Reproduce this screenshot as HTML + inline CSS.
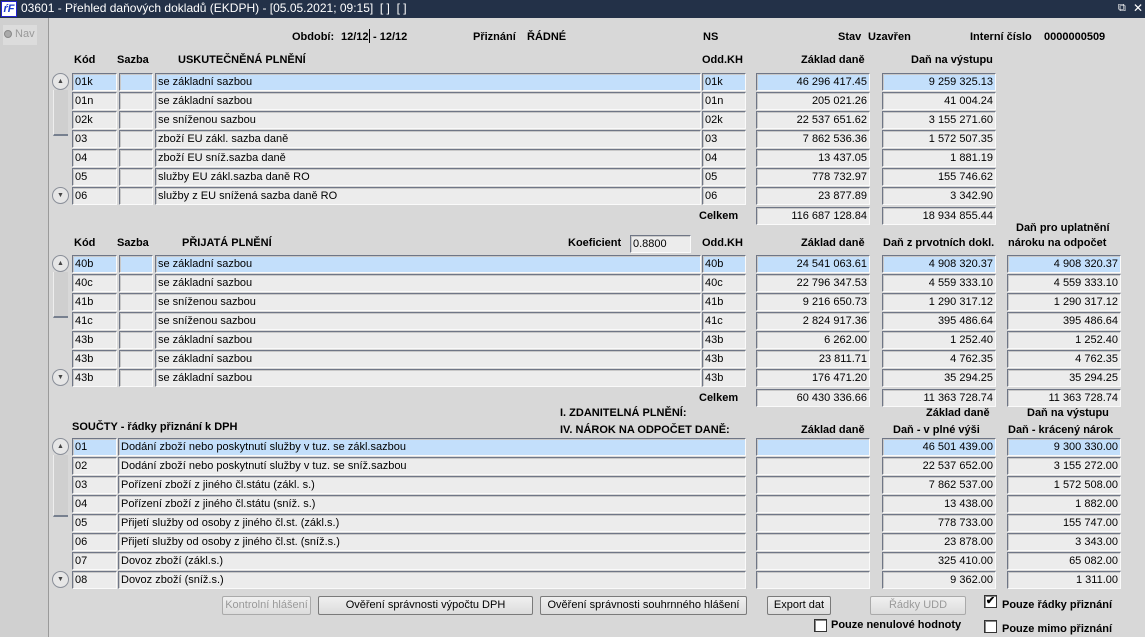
<!DOCTYPE html>
<html><head><meta charset="utf-8"><style>
*{box-sizing:border-box}
body{margin:0;width:1145px;height:637px;overflow:hidden;background:#d8d8d8;font-family:"Liberation Sans",Tahoma,sans-serif;font-size:11px;color:#000;position:relative}
.a{position:absolute;white-space:nowrap}
.b{font-weight:bold}
.r{text-align:right}
.f{position:absolute;height:18px;background:#ececec;border:1px solid;border-color:#6f7686 #fafafa #fafafa #6f7686;box-shadow:inset 1px 1px 0 #c8c8c8;line-height:17px;padding:0 2px;white-space:nowrap;overflow:hidden}
.s{background:#c3dffb}
.n{text-align:right}
.btn{position:absolute;height:19px;border:1px solid #7a7a7a;border-radius:2px;background:linear-gradient(#f0f0f0,#dcdcdc);text-align:center;line-height:16px;font-size:11px}
.dis{color:#9a9a9a;border-color:#aaa}
.cb{position:absolute;width:13px;height:13px;border:1px solid #333;background:#fff;box-shadow:inset 1px 1px 0 #888}
.sc{position:absolute;left:52px;width:17px}
.up,.dn{position:absolute;left:0;width:17px;height:17px;border:1px solid #8a8f99;border-radius:9px;background:#e6e6e6;font-size:7px;text-align:center;line-height:15px;color:#444}
.tr{position:absolute;left:1px;width:15px;background:#cfcfcf;border-left:1px solid #eee;border-bottom:2px solid #77808f}
</style></head><body>
<div class="a" style="left:0;top:0;width:1145px;height:18px;background:#233148"></div>
<div class="a" style="left:1px;top:1px;width:16px;height:16px;background:#fff;border:1px solid #22c;color:#1a3ad0;font-weight:bold;font-style:italic;font-size:11px;line-height:14px;text-align:center">ŕF</div>
<div class="a" style="left:21px;top:1px;color:#fff;font-size:12px">03601 - Přehled daňových dokladů (EKDPH) - [05.05.2021; 09:15]&nbsp; [ ]&nbsp; [ ]</div>
<div class="a" style="left:1118px;top:2px;color:#fff;font-size:11px">⧉</div>
<div class="a" style="left:1133px;top:1px;color:#fff;font-size:12px">✕</div>
<div class="a" style="left:0;top:18px;width:49px;height:619px;background:#d0d0d0;border-right:1px solid #9a9a9a"></div>
<div class="a" style="left:3px;top:25px;width:34px;height:20px;background:#dcdcdc;color:#999;line-height:18px;padding-left:1px"><span style="display:inline-block;width:8px;height:8px;border-radius:5px;background:#aaa;border:1px solid #888;vertical-align:-1px"></span> Nav</div>

<div class="a b" style="left:292px;top:31px">Období:</div>
<div class="a b" style="left:341px;top:31px">12/12</div>
<div class="a" style="left:369px;top:29px;width:1px;height:14px;background:#000"></div>
<div class="a b" style="left:373px;top:31px">- 12/12</div>
<div class="a b" style="left:473px;top:31px">Přiznání</div>
<div class="a b" style="left:527px;top:31px">ŘÁDNÉ</div>
<div class="a b" style="left:703px;top:31px">NS</div>
<div class="a b" style="left:838px;top:31px">Stav</div>
<div class="a b" style="left:868px;top:31px">Uzavřen</div>
<div class="a b" style="left:970px;top:31px">Interní číslo</div>
<div class="a b" style="left:1044px;top:31px">0000000509</div>

<div class="a b" style="left:74px;top:54px">Kód</div>
<div class="a b" style="left:117px;top:54px">Sazba</div>
<div class="a b" style="left:178px;top:54px">USKUTEČNĚNÁ PLNĚNÍ</div>
<div class="a b" style="left:702px;top:54px">Odd.KH</div>
<div class="a b" style="left:801px;top:54px">Základ daně</div>
<div class="a b" style="left:911px;top:54px">Daň na výstupu</div>

<div class="sc" style="top:73px;height:132px"><div class="up" style="top:0">▲</div><div class="tr" style="top:17px;height:46px"></div><div class="dn" style="top:114px">▼</div></div>

<div class="f s" style="left:72px;top:73px;width:45px">01k</div><div class="f s" style="left:119px;top:73px;width:34px"></div><div class="f s" style="left:155px;top:73px;width:546px">se základní sazbou</div><div class="f s" style="left:702px;top:73px;width:44px">01k</div><div class="f s n" style="left:756px;top:73px;width:114px">46 296 417.45</div><div class="f s n" style="left:882px;top:73px;width:114px">9 259 325.13</div>
<div class="f" style="left:72px;top:92px;width:45px">01n</div><div class="f" style="left:119px;top:92px;width:34px"></div><div class="f" style="left:155px;top:92px;width:546px">se základní sazbou</div><div class="f" style="left:702px;top:92px;width:44px">01n</div><div class="f n" style="left:756px;top:92px;width:114px">205 021.26</div><div class="f n" style="left:882px;top:92px;width:114px">41 004.24</div>
<div class="f" style="left:72px;top:111px;width:45px">02k</div><div class="f" style="left:119px;top:111px;width:34px"></div><div class="f" style="left:155px;top:111px;width:546px">se sníženou sazbou</div><div class="f" style="left:702px;top:111px;width:44px">02k</div><div class="f n" style="left:756px;top:111px;width:114px">22 537 651.62</div><div class="f n" style="left:882px;top:111px;width:114px">3 155 271.60</div>
<div class="f" style="left:72px;top:130px;width:45px">03</div><div class="f" style="left:119px;top:130px;width:34px"></div><div class="f" style="left:155px;top:130px;width:546px">zboží EU zákl. sazba daně</div><div class="f" style="left:702px;top:130px;width:44px">03</div><div class="f n" style="left:756px;top:130px;width:114px">7 862 536.36</div><div class="f n" style="left:882px;top:130px;width:114px">1 572 507.35</div>
<div class="f" style="left:72px;top:149px;width:45px">04</div><div class="f" style="left:119px;top:149px;width:34px"></div><div class="f" style="left:155px;top:149px;width:546px">zboží EU sníž.sazba daně</div><div class="f" style="left:702px;top:149px;width:44px">04</div><div class="f n" style="left:756px;top:149px;width:114px">13 437.05</div><div class="f n" style="left:882px;top:149px;width:114px">1 881.19</div>
<div class="f" style="left:72px;top:168px;width:45px">05</div><div class="f" style="left:119px;top:168px;width:34px"></div><div class="f" style="left:155px;top:168px;width:546px">služby EU zákl.sazba daně RO</div><div class="f" style="left:702px;top:168px;width:44px">05</div><div class="f n" style="left:756px;top:168px;width:114px">778 732.97</div><div class="f n" style="left:882px;top:168px;width:114px">155 746.62</div>
<div class="f" style="left:72px;top:187px;width:45px">06</div><div class="f" style="left:119px;top:187px;width:34px"></div><div class="f" style="left:155px;top:187px;width:546px">služby z EU snížená sazba daně RO</div><div class="f" style="left:702px;top:187px;width:44px">06</div><div class="f n" style="left:756px;top:187px;width:114px">23 877.89</div><div class="f n" style="left:882px;top:187px;width:114px">3 342.90</div>
<div class="a b" style="left:699px;top:210px">Celkem</div>
<div class="f n" style="left:756px;top:207px;width:114px">116 687 128.84</div><div class="f n" style="left:882px;top:207px;width:114px">18 934 855.44</div>

<div class="a b" style="left:74px;top:237px">Kód</div>
<div class="a b" style="left:117px;top:237px">Sazba</div>
<div class="a b" style="left:182px;top:237px">PŘIJATÁ PLNĚNÍ</div>
<div class="a b" style="left:568px;top:237px">Koeficient</div>
<div class="f" style="left:630px;top:235px;width:61px">0.8800</div>
<div class="a b" style="left:702px;top:237px">Odd.KH</div>
<div class="a b" style="left:801px;top:237px">Základ daně</div>
<div class="a b" style="left:883px;top:237px">Daň z prvotních dokl.</div>
<div class="a b" style="left:1016px;top:222px">Daň pro uplatnění</div>
<div class="a b" style="left:1008px;top:237px">nároku na odpočet</div>

<div class="sc" style="top:255px;height:132px"><div class="up" style="top:0">▲</div><div class="tr" style="top:17px;height:46px"></div><div class="dn" style="top:114px">▼</div></div>

<div class="f s" style="left:72px;top:255px;width:45px">40b</div><div class="f s" style="left:119px;top:255px;width:34px"></div><div class="f s" style="left:155px;top:255px;width:546px">se základní sazbou</div><div class="f s" style="left:702px;top:255px;width:44px">40b</div><div class="f s n" style="left:756px;top:255px;width:114px">24 541 063.61</div><div class="f s n" style="left:882px;top:255px;width:114px">4 908 320.37</div><div class="f s n" style="left:1007px;top:255px;width:114px">4 908 320.37</div>
<div class="f" style="left:72px;top:274px;width:45px">40c</div><div class="f" style="left:119px;top:274px;width:34px"></div><div class="f" style="left:155px;top:274px;width:546px">se základní sazbou</div><div class="f" style="left:702px;top:274px;width:44px">40c</div><div class="f n" style="left:756px;top:274px;width:114px">22 796 347.53</div><div class="f n" style="left:882px;top:274px;width:114px">4 559 333.10</div><div class="f n" style="left:1007px;top:274px;width:114px">4 559 333.10</div>
<div class="f" style="left:72px;top:293px;width:45px">41b</div><div class="f" style="left:119px;top:293px;width:34px"></div><div class="f" style="left:155px;top:293px;width:546px">se sníženou sazbou</div><div class="f" style="left:702px;top:293px;width:44px">41b</div><div class="f n" style="left:756px;top:293px;width:114px">9 216 650.73</div><div class="f n" style="left:882px;top:293px;width:114px">1 290 317.12</div><div class="f n" style="left:1007px;top:293px;width:114px">1 290 317.12</div>
<div class="f" style="left:72px;top:312px;width:45px">41c</div><div class="f" style="left:119px;top:312px;width:34px"></div><div class="f" style="left:155px;top:312px;width:546px">se sníženou sazbou</div><div class="f" style="left:702px;top:312px;width:44px">41c</div><div class="f n" style="left:756px;top:312px;width:114px">2 824 917.36</div><div class="f n" style="left:882px;top:312px;width:114px">395 486.64</div><div class="f n" style="left:1007px;top:312px;width:114px">395 486.64</div>
<div class="f" style="left:72px;top:331px;width:45px">43b</div><div class="f" style="left:119px;top:331px;width:34px"></div><div class="f" style="left:155px;top:331px;width:546px">se základní sazbou</div><div class="f" style="left:702px;top:331px;width:44px">43b</div><div class="f n" style="left:756px;top:331px;width:114px">6 262.00</div><div class="f n" style="left:882px;top:331px;width:114px">1 252.40</div><div class="f n" style="left:1007px;top:331px;width:114px">1 252.40</div>
<div class="f" style="left:72px;top:350px;width:45px">43b</div><div class="f" style="left:119px;top:350px;width:34px"></div><div class="f" style="left:155px;top:350px;width:546px">se základní sazbou</div><div class="f" style="left:702px;top:350px;width:44px">43b</div><div class="f n" style="left:756px;top:350px;width:114px">23 811.71</div><div class="f n" style="left:882px;top:350px;width:114px">4 762.35</div><div class="f n" style="left:1007px;top:350px;width:114px">4 762.35</div>
<div class="f" style="left:72px;top:369px;width:45px">43b</div><div class="f" style="left:119px;top:369px;width:34px"></div><div class="f" style="left:155px;top:369px;width:546px">se základní sazbou</div><div class="f" style="left:702px;top:369px;width:44px">43b</div><div class="f n" style="left:756px;top:369px;width:114px">176 471.20</div><div class="f n" style="left:882px;top:369px;width:114px">35 294.25</div><div class="f n" style="left:1007px;top:369px;width:114px">35 294.25</div>
<div class="a b" style="left:699px;top:392px">Celkem</div>
<div class="f n" style="left:756px;top:389px;width:114px">60 430 336.66</div><div class="f n" style="left:882px;top:389px;width:114px">11 363 728.74</div><div class="f n" style="left:1007px;top:389px;width:114px">11 363 728.74</div>

<div class="a b" style="left:560px;top:407px">I. ZDANITELNÁ PLNĚNÍ:</div>
<div class="a b" style="left:560px;top:424px">IV. NÁROK NA ODPOČET DANĚ:</div>
<div class="a b" style="left:72px;top:421px">SOUČTY - řádky přiznání k DPH</div>
<div class="a b" style="left:801px;top:424px">Základ daně</div>
<div class="a b" style="left:926px;top:407px">Základ daně</div>
<div class="a b" style="left:893px;top:424px">Daň - v plné výši</div>
<div class="a b" style="left:1027px;top:407px">Daň na výstupu</div>
<div class="a b" style="left:1008px;top:424px">Daň - krácený nárok</div>

<div class="sc" style="top:438px;height:151px"><div class="up" style="top:0">▲</div><div class="tr" style="top:17px;height:62px"></div><div class="dn" style="top:133px">▼</div></div>

<div class="f s" style="left:72px;top:438px;width:45px">01</div><div class="f s" style="left:118px;top:438px;width:628px">Dodání zboží nebo poskytnutí služby v tuz. se zákl.sazbou</div><div class="f s" style="left:756px;top:438px;width:114px"></div><div class="f s n" style="left:882px;top:438px;width:114px">46 501 439.00</div><div class="f s n" style="left:1007px;top:438px;width:114px">9 300 330.00</div>
<div class="f" style="left:72px;top:457px;width:45px">02</div><div class="f" style="left:118px;top:457px;width:628px">Dodání zboží nebo poskytnutí služby v tuz. se sníž.sazbou</div><div class="f" style="left:756px;top:457px;width:114px"></div><div class="f n" style="left:882px;top:457px;width:114px">22 537 652.00</div><div class="f n" style="left:1007px;top:457px;width:114px">3 155 272.00</div>
<div class="f" style="left:72px;top:476px;width:45px">03</div><div class="f" style="left:118px;top:476px;width:628px">Pořízení zboží z jiného čl.státu (zákl. s.)</div><div class="f" style="left:756px;top:476px;width:114px"></div><div class="f n" style="left:882px;top:476px;width:114px">7 862 537.00</div><div class="f n" style="left:1007px;top:476px;width:114px">1 572 508.00</div>
<div class="f" style="left:72px;top:495px;width:45px">04</div><div class="f" style="left:118px;top:495px;width:628px">Pořízení zboží z jiného čl.státu (sníž. s.)</div><div class="f" style="left:756px;top:495px;width:114px"></div><div class="f n" style="left:882px;top:495px;width:114px">13 438.00</div><div class="f n" style="left:1007px;top:495px;width:114px">1 882.00</div>
<div class="f" style="left:72px;top:514px;width:45px">05</div><div class="f" style="left:118px;top:514px;width:628px">Přijetí služby od osoby z jiného čl.st. (zákl.s.)</div><div class="f" style="left:756px;top:514px;width:114px"></div><div class="f n" style="left:882px;top:514px;width:114px">778 733.00</div><div class="f n" style="left:1007px;top:514px;width:114px">155 747.00</div>
<div class="f" style="left:72px;top:533px;width:45px">06</div><div class="f" style="left:118px;top:533px;width:628px">Přijetí služby od osoby z jiného čl.st. (sníž.s.)</div><div class="f" style="left:756px;top:533px;width:114px"></div><div class="f n" style="left:882px;top:533px;width:114px">23 878.00</div><div class="f n" style="left:1007px;top:533px;width:114px">3 343.00</div>
<div class="f" style="left:72px;top:552px;width:45px">07</div><div class="f" style="left:118px;top:552px;width:628px">Dovoz zboží (zákl.s.)</div><div class="f" style="left:756px;top:552px;width:114px"></div><div class="f n" style="left:882px;top:552px;width:114px">325 410.00</div><div class="f n" style="left:1007px;top:552px;width:114px">65 082.00</div>
<div class="f" style="left:72px;top:571px;width:45px">08</div><div class="f" style="left:118px;top:571px;width:628px">Dovoz zboží (sníž.s.)</div><div class="f" style="left:756px;top:571px;width:114px"></div><div class="f n" style="left:882px;top:571px;width:114px">9 362.00</div><div class="f n" style="left:1007px;top:571px;width:114px">1 311.00</div>

<div class="btn dis" style="left:222px;top:596px;width:89px">Kontrolní hlášení</div>
<div class="btn" style="left:318px;top:596px;width:215px">Ověření správnosti výpočtu DPH</div>
<div class="btn" style="left:540px;top:596px;width:207px">Ověření správnosti souhrnného hlášení</div>
<div class="btn" style="left:767px;top:596px;width:64px">Export dat</div>
<div class="btn dis" style="left:870px;top:596px;width:96px">Řádky UDD</div>
<div class="cb" style="left:984px;top:595px;font-size:11px;line-height:10px;text-align:center;font-weight:bold">✔</div>
<div class="a b" style="left:1002px;top:599px">Pouze řádky přiznání</div>
<div class="cb" style="left:814px;top:619px"></div>
<div class="a b" style="left:831px;top:619px">Pouze nenulové hodnoty</div>
<div class="cb" style="left:984px;top:620px"></div>
<div class="a b" style="left:1002px;top:623px">Pouze mimo přiznání</div>
</body></html>
